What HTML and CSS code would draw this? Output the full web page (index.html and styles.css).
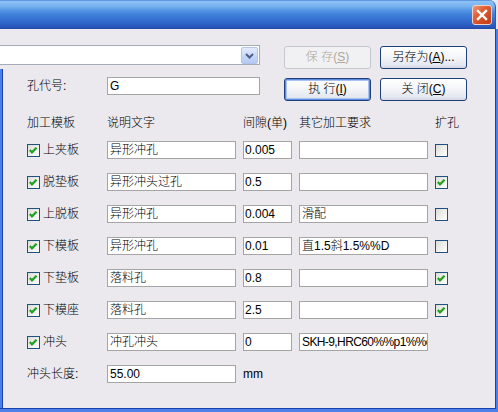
FILE: index.html
```html
<!DOCTYPE html>
<html lang="zh-CN">
<head>
<meta charset="utf-8">
<title>加工模板</title>
<link rel="stylesheet" href="styles.css">
</head>
<body>
<div class="window">
  <div class="titlebar">
    <div class="close"><svg width="20" height="20" viewBox="0 0 20 20"><path d="M6 6L14 14M14 6L6 14" stroke="#fff" stroke-width="2.4" stroke-linecap="square"/></svg></div>
  </div>
  <div class="client">
    <div class="top">
      <div class="topleft">
        <div class="combo"><div class="drop"><svg width="15" height="15" viewBox="0 0 15 15"><path d="M4 6L7.5 9.5L11 6" fill="none" stroke="#4d6185" stroke-width="2"/></svg></div></div>
        <div class="field-row"><span class="lbl">孔代号:</span><div class="box w153">G</div></div>
      </div>
      <div class="buttons">
        <div class="btn disabled">保 存(<u>S</u>)</div>
        <div class="btn">另存为(<u>A</u>)...</div>
        <div class="btn default">执 行(<u>I</u>)</div>
        <div class="btn">关 闭(<u>C</u>)</div>
      </div>
    </div>
    <div class="grid header">
      <span>加工模板</span><span>说明文字</span><span>间隙(单)</span><span>其它加工要求</span><span>扩孔</span>
    </div>
    <div class="grid rows">
      <label class="chk"><span class="cb"><svg width="11" height="11" viewBox="0 0 11 11"><polyline points="1.8,5 4,7.4 8.6,2.8" fill="none" stroke="#21a121" stroke-width="2.2"/></svg></span>上夹板</label>
      <div class="box d">异形冲孔</div><div class="box g">0.005</div><div class="box o"></div><span class="cb"></span>

      <label class="chk"><span class="cb"><svg width="11" height="11" viewBox="0 0 11 11"><polyline points="1.8,5 4,7.4 8.6,2.8" fill="none" stroke="#21a121" stroke-width="2.2"/></svg></span>脱垫板</label>
      <div class="box d">异形冲头过孔</div><div class="box g">0.5</div><div class="box o"></div><span class="cb"><svg width="11" height="11" viewBox="0 0 11 11"><polyline points="1.8,5 4,7.4 8.6,2.8" fill="none" stroke="#21a121" stroke-width="2.2"/></svg></span>

      <label class="chk"><span class="cb"><svg width="11" height="11" viewBox="0 0 11 11"><polyline points="1.8,5 4,7.4 8.6,2.8" fill="none" stroke="#21a121" stroke-width="2.2"/></svg></span>上脱板</label>
      <div class="box d">异形冲孔</div><div class="box g">0.004</div><div class="box o">滑配</div><span class="cb"></span>

      <label class="chk"><span class="cb"><svg width="11" height="11" viewBox="0 0 11 11"><polyline points="1.8,5 4,7.4 8.6,2.8" fill="none" stroke="#21a121" stroke-width="2.2"/></svg></span>下模板</label>
      <div class="box d">异形冲孔</div><div class="box g">0.01</div><div class="box o">直1.5斜1.5%%D</div><span class="cb"></span>

      <label class="chk"><span class="cb"><svg width="11" height="11" viewBox="0 0 11 11"><polyline points="1.8,5 4,7.4 8.6,2.8" fill="none" stroke="#21a121" stroke-width="2.2"/></svg></span>下垫板</label>
      <div class="box d">落料孔</div><div class="box g">0.8</div><div class="box o"></div><span class="cb"><svg width="11" height="11" viewBox="0 0 11 11"><polyline points="1.8,5 4,7.4 8.6,2.8" fill="none" stroke="#21a121" stroke-width="2.2"/></svg></span>

      <label class="chk"><span class="cb"><svg width="11" height="11" viewBox="0 0 11 11"><polyline points="1.8,5 4,7.4 8.6,2.8" fill="none" stroke="#21a121" stroke-width="2.2"/></svg></span>下模座</label>
      <div class="box d">落料孔</div><div class="box g">2.5</div><div class="box o"></div><span class="cb"><svg width="11" height="11" viewBox="0 0 11 11"><polyline points="1.8,5 4,7.4 8.6,2.8" fill="none" stroke="#21a121" stroke-width="2.2"/></svg></span>

      <label class="chk"><span class="cb"><svg width="11" height="11" viewBox="0 0 11 11"><polyline points="1.8,5 4,7.4 8.6,2.8" fill="none" stroke="#21a121" stroke-width="2.2"/></svg></span>冲头</label>
      <div class="box d">冲孔冲头</div><div class="box g">0</div><div class="box o tight">SKH-9,HRC60%%p1%%c</div><span></span>

      <span class="lbl">冲头长度:</span>
      <div class="box d">55.00</div><span class="unit">mm</span>
    </div>
  </div>
</div>
</body>
</html>
```

FILE: styles.css
```css
* { box-sizing: border-box; }
html, body { margin: 0; padding: 0; }
body {
  width: 498px;
  height: 412px;
  overflow: hidden;
  font-family: "Liberation Sans", "Noto Sans CJK SC", sans-serif;
  font-size: 12px;
  font-weight: 300;
  color: #000;
  background: #e4e8f0;
}
.window {
  width: 498px;
  height: 412px;
  display: grid;
  grid-template-columns: 496px 2px;
  grid-template-rows: 29px 380px 3px;
  background: linear-gradient(#e4e8f0 0 29px, #4a80e8 29px);
}
.titlebar {
  grid-column: 1;
  grid-row: 1;
  border-top-right-radius: 7px;
  border-right: 1px solid #2a56c0;
  background: linear-gradient(to bottom, #3567c9 0, #8ec2f4 1px, #78b3f0 6px, #5898e6 10px, #4183db 14px, #3873d3 19px, #2e61c5 24px, #2651b4 28px, #1d44a3 29px);
  display: flex;
  justify-content: flex-end;
  align-items: flex-start;
  padding: 5px 3px 0 0;
}
.close {
  width: 20px;
  height: 20px;
  border: 1px solid #f3d2c6;
  border-radius: 3px;
  background: linear-gradient(135deg, #ef9a7a 0%, #e0623a 35%, #cf4a22 70%, #c23d18 100%);
  display: flex;
  align-items: center;
  justify-content: center;
}
.close svg { display: block; margin: -1px; }
.client {
  grid-column: 1;
  grid-row: 2;
  position: relative;
  background: #ebe9ed;
  border-right: 1px solid #1a41ad;
  border-bottom: 1px solid #1a41ad;
  padding-top: 16px;
}
.client::before {
  content: "";
  position: absolute;
  left: 0;
  top: 40px;
  bottom: 0;
  width: 3px;
  background: linear-gradient(to right, #4a80e8 0 2px, #1a41ad 2px 3px);
}
.top {
  display: flex;
  align-items: flex-start;
  gap: 24px;
}
.topleft { width: 260px; }
.combo {
  height: 20px;
  border: 1px solid #a5acb5;
  border-left: none;
  background: #fff;
  display: flex;
  justify-content: flex-end;
  align-items: center;
  padding-right: 1px;
}
.drop {
  width: 17px;
  height: 17px;
  border: 1px solid #b3c6ea;
  border-radius: 2px;
  background: linear-gradient(#e3ecfd, #c3d5f8 60%, #b4c9f3);
  display: flex;
  align-items: center;
  justify-content: center;
}
.drop svg { display: block; }
.field-row {
  display: flex;
  align-items: center;
  margin-top: 12px;
  padding-left: 27px;
}
.lbl { width: 80px; line-height: 18px; }
.buttons {
  display: grid;
  grid-template-columns: 87px 87px;
  grid-auto-rows: 23px;
  gap: 9px;
  margin-top: 1px;
}
.btn {
  border: 1px solid #1f3f78;
  border-radius: 3px;
  background: linear-gradient(#ffffff 0%, #f5f6f8 45%, #e4e8f0 85%, #d2d8e4 100%);
  text-align: center;
  line-height: 21px;
  white-space: nowrap;
}
.btn.default {
  box-shadow: inset 0 0 0 1px #5f8ae0, inset 0 0 0 2px #a8c3f2;
}
.btn.disabled {
  border-color: #c6c8ce;
  background: #f1f0f3;
  color: #aca899;
}
.grid {
  display: grid;
  grid-template-columns: 80px 136px 56px 136px 13px;
  padding-left: 27px;
}
.header {
  margin-top: 13px;
  grid-auto-rows: 18px;
  line-height: 18px;
  white-space: nowrap;
}
.rows {
  margin-top: 9px;
  grid-auto-rows: 18px;
  row-gap: 14px;
  align-items: center;
}
.box {
  height: 18px;
  border: 1px solid #a5a5a5;
  background: #fff;
  line-height: 16px;
  padding: 0 2px;
  white-space: nowrap;
  overflow: hidden;
}
.w153 { width: 153px; }
.d { width: 129px; }
.g { width: 49px; padding-left: 1px; }
.o { width: 129px; }
.tight { letter-spacing: -0.6px; }
.chk {
  display: flex;
  align-items: center;
  gap: 3px;
  line-height: 18px;
  white-space: nowrap;
}
.cb {
  width: 13px;
  height: 13px;
  border: 1px solid #1c5180;
  background: linear-gradient(135deg, #dcdcd7, #ffffff);
  display: flex;
}
.cb svg { display: block; }
.unit { line-height: 18px; }
```
